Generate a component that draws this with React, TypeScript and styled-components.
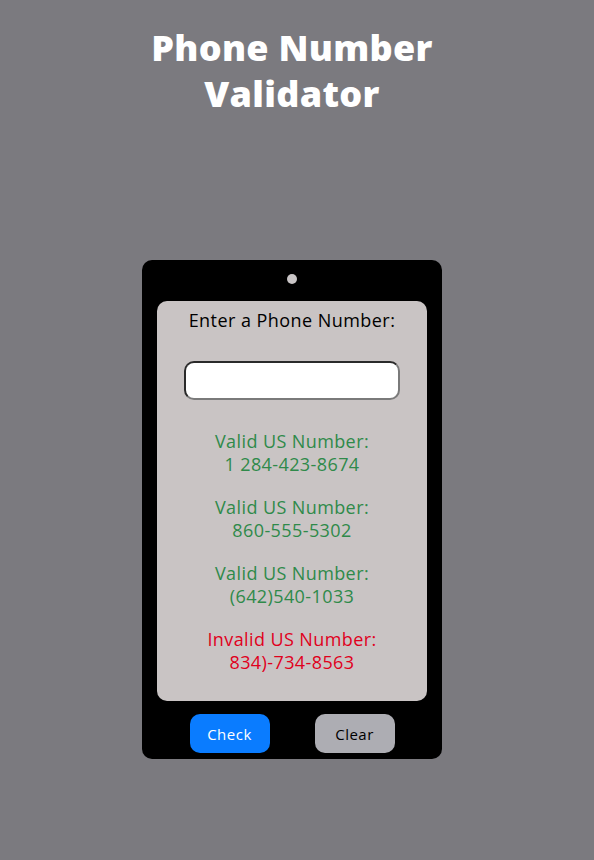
import React, { useState } from "react";
import styled, { createGlobalStyle } from "styled-components";

const Global = createGlobalStyle`
  html, body { margin: 0; padding: 0; }
  body {
    background: #7b7a7f;
    font-family: "Open Sans", "Noto Sans", sans-serif;
    min-height: 860px;
  }
`;

const Page = styled.main`
  display: flex;
  flex-direction: column;
  align-items: center;
  padding: 25px 10px 0 0;
`;

const Title = styled.h1`
  margin: 0;
  width: 320px;
  text-align: center;
  color: #fff;
  font-size: 36px;
  line-height: 46px;
  font-weight: 800;
  letter-spacing: 0.3px;
`;

const Phone = styled.div`
  margin-top: 143px;
  width: 300px;
  box-sizing: border-box;
  background: #000;
  border-radius: 10px;
  padding: 14px 15px 6px;
  display: flex;
  flex-direction: column;
  align-items: center;
`;

const Camera = styled.div`
  width: 10px;
  height: 10px;
  border-radius: 50%;
  background: #c9c5c6;
  margin-bottom: 17px;
`;

const Screen = styled.div`
  width: 270px;
  height: 400px;
  box-sizing: border-box;
  background: #c9c4c4;
  border-radius: 10px;
  padding-top: 8px;
  display: flex;
  flex-direction: column;
  align-items: center;
`;

const Label = styled.label`
  font-size: 18px;
  line-height: 23px;
  letter-spacing: 0.45px;
  color: #000;
`;

const Input = styled.input`
  margin-top: 29px;
  width: 216px;
  height: 39px;
  box-sizing: border-box;
  border-radius: 10px;
  border: 2px solid;
  border-color: #2a2a2a #7a7a7a #7a7a7a #2a2a2a;
  background: #fff;
  outline: none;
  font-size: 16px;
  padding: 0 8px;
`;

const Results = styled.div`
  margin-top: 30px;
  display: flex;
  flex-direction: column;
  gap: 20px;
`;

const Result = styled.p<{ $valid: boolean }>`
  margin: 0;
  text-align: center;
  font-size: 18px;
  line-height: 23px;
  letter-spacing: 0.4px;
  color: ${(p) => (p.$valid ? "#2f8a4a" : "#e0001c")};
`;

const Buttons = styled.div`
  display: flex;
  gap: 45px;
  margin-top: 13px;
`;

const Button = styled.button<{ $primary?: boolean }>`
  width: 80px;
  height: 39px;
  border: none;
  border-radius: 10px;
  font-family: inherit;
  font-size: 15px;
  letter-spacing: 0.5px;
  cursor: pointer;
  background: ${(p) => (p.$primary ? "#0a7cff" : "#adadb3")};
  color: ${(p) => (p.$primary ? "#fff" : "#000")};
`;

const initial = [
  { valid: true, num: "1 284-423-8674" },
  { valid: true, num: "860-555-5302" },
  { valid: true, num: "(642)540-1033" },
  { valid: false, num: "834)-734-8563" },
];

export default function App() {
  const [value, setValue] = useState("");
  const [results, setResults] = useState(initial);
  return (
    <Page>
      <Global />
      <Title>Phone Number Validator</Title>
      <Phone>
        <Camera />
        <Screen>
          <Label htmlFor="user-input">Enter a Phone Number:</Label>
          <Input id="user-input" value={value} onChange={(e) => setValue(e.target.value)} />
          <Results>
            {results.map((r, i) => (
              <Result key={i} $valid={r.valid}>
                {r.valid ? "Valid" : "Invalid"} US Number:
                <br />
                {r.num}
              </Result>
            ))}
          </Results>
        </Screen>
        <Buttons>
          <Button $primary>Check</Button>
          <Button onClick={() => setResults([])}>Clear</Button>
        </Buttons>
      </Phone>
    </Page>
  );
}
